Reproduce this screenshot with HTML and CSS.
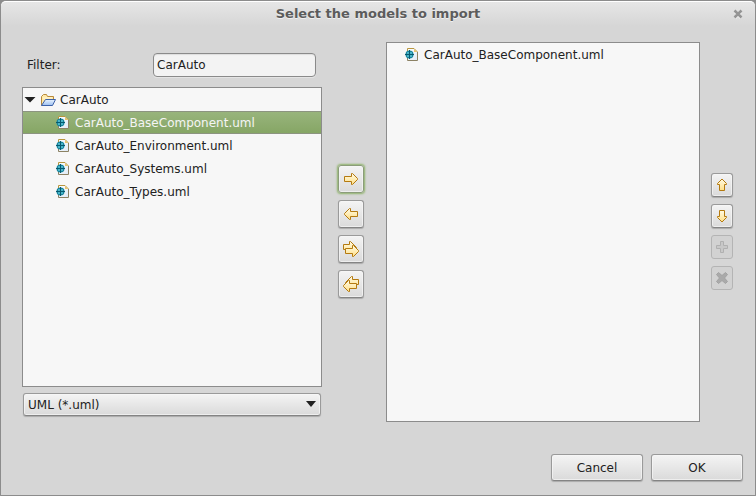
FILE: index.html
```html
<!DOCTYPE html>
<html lang="en">
<head>
<meta charset="utf-8">
<title>Select the models to import</title>
<link rel="stylesheet" href="styles.css">
</head>
<body>
<svg class="defs" aria-hidden="true">
  <defs>
    <linearGradient id="gold" x1="0" y1="0" x2="0" y2="1"><stop offset="0" stop-color="#fffbe6"/><stop offset="1" stop-color="#ffdf86"/></linearGradient>
    <linearGradient id="blue" x1="0" y1="0" x2="0" y2="1"><stop offset="0" stop-color="#e8f3ff"/><stop offset="1" stop-color="#9dc0f0"/></linearGradient>
    <linearGradient id="paper" x1="0" y1="0" x2="1" y2="1"><stop offset="0" stop-color="#ffffff"/><stop offset="1" stop-color="#dfeaf6"/></linearGradient>
    <symbol id="model" viewBox="0 0 16 16">
      <path d="M3.500 1.500H10L13.500 5V13.500H3.500Z" fill="url(#paper)"/>
      <path d="M3.500 4V1.500H10L13.500 5" fill="none" stroke="#b8963e"/>
      <path d="M10 2V5H13Z" fill="#e9c46c"/>
      <path d="M13.500 5V13.500H3.500V11" fill="none" stroke="#8c8264"/>
      <circle cx="5.500" cy="7.500" r="4" fill="#14829b"/>
      <path d="M1 7.500H10M5.500 3V12" stroke="#075a70"/>
      <path d="M3 5h2v2H3zM6 5h2v2H6zM3 8h2v2H3zM6 8h2v2H6z" fill="#48b4c8"/>
    </symbol>
    <symbol id="right" viewBox="0 0 16 16">
      <path d="M1.500 5.500H8.500V2.500H9.500L14.500 7.500V8.500L9.500 13.500H8.500V10.500H1.500Z" fill="url(#gold)" stroke="#b47a10"/>
    </symbol>
    <symbol id="left" viewBox="0 0 16 16">
      <path d="M14.500 5.500H7.500V2.500H6.500L1.500 7.500V8.500L6.500 13.500H7.500V10.500H14.500Z" fill="url(#gold)" stroke="#b47a10"/>
    </symbol>
    <symbol id="all-right" viewBox="0 0 16 16">
      <path d="M.5 3.500H6.500V.5H7.500L13.500 6.500L7.500 12.500H6.500V8.500H.5Z" fill="url(#gold)" stroke="#b47a10"/>
      <path d="M2.500 7.500H9.500V4.500H10.500L15.500 9.500V10.500L10.500 15.500H9.500V12.500H2.500Z" fill="url(#gold)" stroke="#b47a10"/>
    </symbol>
    <symbol id="all-left" viewBox="0 0 16 16">
      <path d="M15.500 3.500H9.500V.5H8.500L2.500 6.500L8.500 12.500H9.500V8.500H15.500Z" fill="url(#gold)" stroke="#b47a10"/>
      <path d="M13.500 7.500H6.500V4.500H5.500L.5 9.500V10.500L5.500 15.500H6.500V12.500H13.500Z" fill="url(#gold)" stroke="#b47a10"/>
    </symbol>
    <symbol id="up" viewBox="0 0 16 16">
      <path d="M5.500 13.500V7.500H3.500V6.500L8 2L12.500 6.500V7.500H10.500V13.500Z" fill="url(#gold)" stroke="#b47a10"/>
    </symbol>
    <symbol id="down" viewBox="0 0 16 16">
      <path d="M5.500 2.500V8.500H3.500V9.500L8 14L12.500 9.500V8.500H10.500V2.500Z" fill="url(#gold)" stroke="#b47a10"/>
    </symbol>
    <symbol id="add" viewBox="0 0 16 16">
      <path d="M6.500 2.500H9.500V6.500H13.500V9.500H9.500V13.500H6.500V9.500H2.500V6.500H6.500Z" fill="#c8c8c8" stroke="#b0b0b0"/>
    </symbol>
    <symbol id="remove" viewBox="0 0 16 16">
      <path d="M2.500 4.500L4.500 2.500L8 5.500L11.500 2.500L13.500 4.500L10.500 8L13.500 11.500L11.500 13.500L8 10.500L4.500 13.500L2.500 11.500L5.500 8Z" fill="#aaa" stroke="#a2a2a2"/>
    </symbol>
  </defs>
</svg>
<div class="dialog" role="dialog" aria-labelledby="title">
  <header class="titlebar">
    <h1 id="title">Select the models to import</h1>
    <button class="close" type="button" aria-label="Close"><svg viewBox="0 0 10 10"><path d="M2 3L8 9M8 3L2 9" stroke="#f4f4f4" stroke-width="2.500"/><path d="M1.500 1.500L8.500 8.500M8.500 1.500L1.500 8.500" stroke="#949494" stroke-width="2.500"/></svg></button>
  </header>
  <main class="content">
    <section class="source">
      <div class="filter">
        <label for="filter">Filter:</label>
        <input id="filter" type="text" value="CarAuto">
      </div>
      <ul class="list tree">
        <li class="row root"><span class="expander"></span><svg class="icon" viewBox="0 0 16 16"><path d="M1.500 13.500V4.500L3.500 2.500H6.500L7.500 4.500H13.500V8" fill="#ffe9a8" stroke="#b8893a"/><path d="M3 6H12" stroke="#fff7d8"/><path d="M1.500 13.500L5.500 7.500H15.500L12.500 13.500Z" fill="url(#blue)" stroke="#3e62a8"/></svg>CarAuto</li>
        <li class="row selected"><svg class="icon"><use href="#model"/></svg>CarAuto_BaseComponent.uml</li>
        <li class="row"><svg class="icon"><use href="#model"/></svg>CarAuto_Environment.uml</li>
        <li class="row"><svg class="icon"><use href="#model"/></svg>CarAuto_Systems.uml</li>
        <li class="row"><svg class="icon"><use href="#model"/></svg>CarAuto_Types.uml</li>
      </ul>
      <div class="combo">
        <select aria-label="File type"><option>UML (*.uml)</option></select>
      </div>
    </section>
    <div class="transfer">
      <button class="tool focused" type="button" aria-label="Add"><svg class="icon"><use href="#right"/></svg></button>
      <button class="tool" type="button" aria-label="Remove"><svg class="icon"><use href="#left"/></svg></button>
      <button class="tool" type="button" aria-label="Add all"><svg class="icon"><use href="#all-right"/></svg></button>
      <button class="tool" type="button" aria-label="Remove all"><svg class="icon"><use href="#all-left"/></svg></button>
    </div>
    <ul class="list chosen">
      <li class="row"><svg class="icon"><use href="#model"/></svg>CarAuto_BaseComponent.uml</li>
    </ul>
    <div class="order">
      <button class="tool" type="button" aria-label="Move up"><svg class="icon"><use href="#up"/></svg></button>
      <button class="tool" type="button" aria-label="Move down"><svg class="icon"><use href="#down"/></svg></button>
      <button class="tool" type="button" aria-label="New" disabled><svg class="icon"><use href="#add"/></svg></button>
      <button class="tool" type="button" aria-label="Delete" disabled><svg class="icon"><use href="#remove"/></svg></button>
    </div>
  </main>
  <footer class="actions">
    <button class="action" type="button">Cancel</button>
    <button class="action" type="button">OK</button>
  </footer>
</div>
</body>
</html>
```
FILE: styles.css
```css
* { box-sizing: border-box; }

body {
  margin: 0;
  background: #8c8c8c;
  color: #212121;
  font: 12px/16px "DejaVu Sans", sans-serif;
}

button, input, select {
  margin: 0;
  color: inherit;
  font: inherit;
}

.defs {
  position: absolute;
  width: 0;
  height: 0;
}

.dialog {
  display: flex;
  flex-direction: column;
  min-height: 100vh;
  border: 1px solid #8c8c8c;
  border-radius: 6px 6px 0 0;
  background: #d6d6d6;
}

.titlebar {
  display: grid;
  grid-template-columns: 24px 1fr 24px;
  align-items: center;
  height: 25px;
  padding: 0 5px;
  border-top: 1px solid #fff;
  border-radius: 5px 5px 0 0;
  background: linear-gradient(#e6e6e6, #d6d6d6);
}

.titlebar h1 {
  grid-column: 2;
  margin: 0;
  color: #5c5c5c;
  font-size: 13px;
  line-height: 16px;
  text-align: center;
  text-shadow: 0 1px #f0f0f0;
}

.close {
  display: grid;
  place-items: center;
  height: 20px;
  padding: 0;
  border: 0;
  background: none;
}

.close svg {
  width: 10px;
  height: 10px;
}

.content {
  display: flex;
  flex: 1;
  padding: 16px 22px 0 21px;
}

.source {
  display: flex;
  flex: 1 1 300px;
  flex-direction: column;
  min-width: 0;
}

.filter {
  display: flex;
  align-items: center;
  height: 45px;
  padding: 0 6px 0 5px;
}

.filter label {
  flex: 1;
}

.filter input {
  width: 163px;
  height: 24px;
  padding: 0 3px;
  border: 1px solid #8a8a8a;
  border-radius: 4px;
  outline: 0;
  background: #f3f3f3;
  box-shadow: inset 0 1px 1px #ddd, 0 1px #e4e4e4;
}

.list {
  flex: 1;
  margin: 0;
  padding: 0;
  border: 1px solid #8c8c8c;
  background: #f7f7f7;
  list-style: none;
}

.row {
  display: flex;
  align-items: center;
  gap: 4px;
  height: 23px;
  padding-left: 32px;
  white-space: nowrap;
}

.root {
  padding-left: 1px;
}

.selected {
  border-top: 1px solid #8c9480;
  border-bottom: 1px solid #8c9480;
  background: linear-gradient(#98b47c, #86a665);
  color: #f5f5f5;
}

.icon {
  flex: none;
  width: 16px;
  height: 16px;
}

.expander {
  width: 12px;
  height: 6px;
  background: #212121;
  clip-path: polygon(0 0, 100% 0, 50% 100%);
}

.combo {
  position: relative;
  margin: 6px 1px;
}

.combo::after {
  position: absolute;
  top: 8px;
  right: 5px;
  width: 10px;
  height: 6px;
  background: #212121;
  clip-path: polygon(0 0, 100% 0, 50% 100%);
  content: "";
  pointer-events: none;
}

.combo select, .tool, .action {
  border: 1px solid #9a9a9a;
  border-bottom-color: #848484;
  border-radius: 3px;
  background: linear-gradient(#f4f4f4, #dadada);
  box-shadow: inset 0 0 0 1px #f8f8f8aa, 0 1px 1px #aaa;
}

.combo select {
  display: block;
  width: 100%;
  height: 23px;
  padding: 0 20px 0 4px;
  appearance: none;
}

.transfer, .order {
  display: flex;
  flex: none;
  flex-direction: column;
  justify-content: center;
  gap: 7px;
  padding-bottom: 2px;
}

.transfer {
  margin: 0 22px 0 16px;
}

.tool {
  display: grid;
  place-items: center;
  width: 26px;
  height: 28px;
  padding: 0;
}

.focused {
  border-color: #8b9c7a;
  box-shadow: inset 0 0 0 1px #f8f8f8aa, 0 0 2px 1px #8fb46a;
}

.order .tool {
  width: 22px;
  height: 24px;
}

.tool:disabled {
  border-color: #b4b4b4;
  background: #d2d2d2;
  box-shadow: none;
}

.chosen {
  flex: 1 1 314px;
  min-width: 0;
}

.chosen .row {
  padding-left: 17px;
}

.order {
  margin-left: 11px;
}

.actions {
  display: flex;
  justify-content: flex-end;
  gap: 8px;
  padding: 32px 12px 14px;
}

.action {
  width: 92px;
  height: 27px;
  padding: 0;
}
```
